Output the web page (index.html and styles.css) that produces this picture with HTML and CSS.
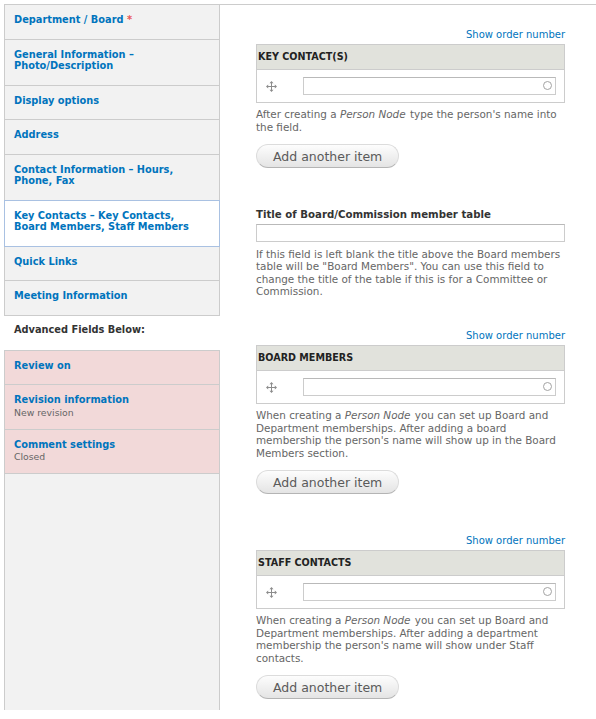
FILE: index.html
```html
<!DOCTYPE html>
<html lang="en">
<head>
  <meta charset="UTF-8">
  <meta name="viewport" content="width=device-width, initial-scale=1.0">
  <title>Edit Department</title>
  <link rel="stylesheet" href="styles.css">
</head>
<body>
  <div class="vtabs">
    <ul class="vtabs-list">
      <li class="vtab"><a href="#">Department / Board <span class="required">*</span></a></li>
      <li class="vtab"><a href="#">General Information – Photo/Description</a></li>
      <li class="vtab"><a href="#">Display options</a></li>
      <li class="vtab"><a href="#">Address</a></li>
      <li class="vtab"><a href="#">Contact Information – Hours, Phone, Fax</a></li>
      <li class="vtab selected"><a href="#">Key Contacts – Key Contacts, Board Members, Staff Members</a></li>
      <li class="vtab"><a href="#">Quick Links</a></li>
      <li class="vtab"><a href="#">Meeting Information</a></li>
      <li class="vtab-heading">Advanced Fields Below:</li>
      <li class="vtab advanced first"><a href="#">Review on</a></li>
      <li class="vtab advanced has-summary"><a href="#">Revision information<span class="summary">New revision</span></a></li>
      <li class="vtab advanced has-summary"><a href="#">Comment settings<span class="summary">Closed</span></a></li>
      <li class="vtab-fill"></li>
    </ul>

    <div class="vtabs-pane">
      <div class="field-multi">
        <a class="show-order" href="#">Show order number</a>
        <div class="field-table">
          <div class="field-head">KEY CONTACT(S)</div>
          <div class="field-row">
            <span class="drag-handle">
              <svg width="11" height="11" viewBox="0 0 11 11"><path d="M5.5 2v7M2 5.5h7" stroke="#8c8c8c" stroke-width="1"/><path d="M5.5 0l2 2.2h-4zM5.5 11l2-2.2h-4zM0 5.5l2.2-2v4zM11 5.5l-2.2-2v4z" fill="#8c8c8c"/></svg>
            </span>
            <span class="autocomplete">
              <input type="text">
              <span class="throbber"></span>
            </span>
          </div>
        </div>
        <div class="description">After creating a <em>Person Node</em> type the person's name into the field.</div>
        <button class="add-item">Add another item</button>
      </div>

      <div class="form-item">
        <label for="board-title">Title of Board/Commission member table</label>
        <input type="text" id="board-title" class="form-text">
        <div class="description">If this field is left blank the title above the Board members table will be "Board Members". You can use this field to change the title of the table if this is for a Committee or Commission.</div>
      </div>

      <div class="field-multi spaced">
        <a class="show-order" href="#">Show order number</a>
        <div class="field-table">
          <div class="field-head">BOARD MEMBERS</div>
          <div class="field-row">
            <span class="drag-handle">
              <svg width="11" height="11" viewBox="0 0 11 11"><path d="M5.5 2v7M2 5.5h7" stroke="#8c8c8c" stroke-width="1"/><path d="M5.5 0l2 2.2h-4zM5.5 11l2-2.2h-4zM0 5.5l2.2-2v4zM11 5.5l-2.2-2v4z" fill="#8c8c8c"/></svg>
            </span>
            <span class="autocomplete">
              <input type="text">
              <span class="throbber"></span>
            </span>
          </div>
        </div>
        <div class="description">When creating a <em>Person Node</em> you can set up Board and Department memberships. After adding a board membership the person's name will show up in the Board Members section.</div>
        <button class="add-item">Add another item</button>
      </div>

      <div class="field-multi spaced-more">
        <a class="show-order" href="#">Show order number</a>
        <div class="field-table">
          <div class="field-head">STAFF CONTACTS</div>
          <div class="field-row">
            <span class="drag-handle">
              <svg width="11" height="11" viewBox="0 0 11 11"><path d="M5.5 2v7M2 5.5h7" stroke="#8c8c8c" stroke-width="1"/><path d="M5.5 0l2 2.2h-4zM5.5 11l2-2.2h-4zM0 5.5l2.2-2v4zM11 5.5l-2.2-2v4z" fill="#8c8c8c"/></svg>
            </span>
            <span class="autocomplete">
              <input type="text">
              <span class="throbber"></span>
            </span>
          </div>
        </div>
        <div class="description">When creating a <em>Person Node</em> you can set up Board and Department memberships. After adding a department membership the person's name will show under Staff contacts.</div>
        <button class="add-item">Add another item</button>
      </div>
    </div>
  </div>
</body>
</html>
```

FILE: styles.css
```css
body {
  margin: 0;
  font-family: "DejaVu Sans", Verdana, sans-serif;
  color: #333;
  background: #fff;
}

.vtabs {
  display: flex;
  margin: 4px 0 0 4px;
  border-top: 1px solid #ccc;
}

/* left column of tabs */
.vtabs-list {
  list-style: none;
  margin: 0;
  padding: 0;
  width: 216px;
  flex-shrink: 0;
  display: flex;
  flex-direction: column;
}

.vtab {
  background: #f2f2f2;
  border: 1px solid #ccc;
  border-top: 0;
}

.vtab a {
  display: block;
  padding: 9px 9px 13px;
  font-size: 9.8px;
  font-weight: bold;
  line-height: 11.5px;
  color: #0074bd;
  text-decoration: none;
}

.vtab .required {
  color: #e95555;
}

.vtab.selected {
  background: #fff;
  border: 1px solid #a9c1e2;
  margin-top: -1px;
}

.vtab.advanced {
  background: #f2d9d9;
}

.vtab.advanced.first {
  border-top: 1px solid #ccc;
}

.vtab.has-summary a {
  padding-bottom: 11px;
}

.vtab .summary {
  display: block;
  margin-top: 1px;
  font-size: 9.3px;
  font-weight: normal;
  line-height: 11px;
  color: #666;
}

.vtab-heading {
  padding: 7px 10px 13px;
  font-size: 9.8px;
  font-weight: bold;
  line-height: 14px;
  color: #333;
}

.vtab-fill {
  flex: 1;
  background: #f2f2f2;
  border: 0 solid #ccc;
  border-width: 0 1px;
}

/* right pane */
.vtabs-pane {
  flex: 1;
  padding: 23px 31px 11px 36px;
}

.field-multi.spaced {
  margin-top: 31.5px;
}

.field-multi.spaced-more {
  margin-top: 40px;
}

.show-order {
  display: block;
  text-align: right;
  font-size: 10px;
  line-height: 14px;
  margin-bottom: 2px;
  color: #0074bd;
  text-decoration: none;
}

.field-table {
  border: 1px solid #ccc;
}

.field-head {
  height: 24px;
  line-height: 24px;
  padding-left: 1px;
  background: #e1e2dc;
  border-bottom: 1px solid #ccc;
  font-size: 9.6px;
  font-weight: bold;
  color: #222;
}

.field-row {
  display: flex;
  align-items: center;
  height: 32px;
  padding: 0 8px 0 9px;
}

.drag-handle {
  display: flex;
  width: 11px;
  height: 11px;
  margin-right: 26px;
}

.autocomplete {
  position: relative;
  flex: 1;
}

.autocomplete input,
.form-text {
  display: block;
  width: 100%;
  height: 18px;
  box-sizing: border-box;
  margin: 0;
  border: 1px solid #ccc;
  border-top-color: #b9b9b9;
  background: #fff;
}

.throbber {
  position: absolute;
  right: 4px;
  top: 4px;
  width: 7px;
  height: 7px;
  border: 1.3px solid #a3a3a3;
  border-radius: 50%;
}

.description {
  margin-top: 5px;
  font-size: 10.4px;
  line-height: 12.5px;
  color: #666;
}

.description em {
  padding-right: 1px;
}

.add-item {
  display: block;
  margin-top: 11px;
  height: 24px;
  padding: 0 16px;
  font-family: "DejaVu Sans", Verdana, sans-serif;
  font-size: 12.5px;
  color: #5a5a5a;
  background: linear-gradient(#fdfdfd, #e4e4e4);
  border: 1px solid #dcdcdc;
  border-bottom-color: #b4b4b4;
  border-radius: 12px;
  cursor: pointer;
}

.form-item {
  margin-top: 40px;
}

.form-item label {
  display: block;
  margin-bottom: 2px;
  font-size: 10.2px;
  font-weight: bold;
  line-height: 14px;
  color: #333;
}

.form-item .description {
  margin-top: 5.5px;
}
```
